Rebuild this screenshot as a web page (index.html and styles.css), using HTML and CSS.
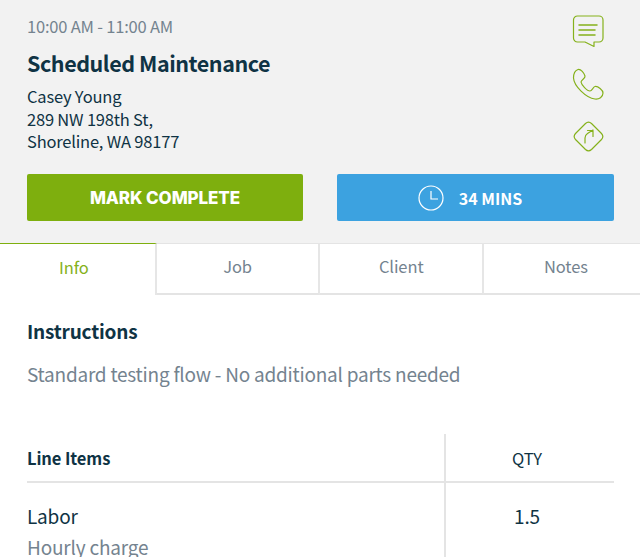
FILE: index.html
```html
<!DOCTYPE html>
<html lang="en">
<head>
  <meta charset="UTF-8" />
  <title>Job Detail</title>
  <link rel="stylesheet" href="styles.css">
</head>
<body>

  <!-- Job summary -->
  <div class="summary">
    <div class="summary-top">
      <div class="summary-text">
        <div class="time">10:00 AM - 11:00 AM</div>
        <h1>Scheduled Maintenance</h1>
        <p>Casey Young<br>289 NW 198th St,<br>Shoreline, WA 98177</p>
      </div>
      <div class="actions">
        <svg width="34" height="34" viewBox="0 0 34 34" fill="none" stroke="#85b11b" stroke-width="1.200" stroke-linejoin="round" stroke-linecap="round">
          <path d="M5.500 2h21.500a4 4 0 0 1 4 4v18a4 4 0 0 1-4 4h-5v4.500L13 28H5.500a4 4 0 0 1-4-4V6a4 4 0 0 1 4-4z"/>
          <path d="M7 11h18M7 16h16M7 21h16" stroke-width="1.500"/>
        </svg>
        <svg width="34" height="34" viewBox="0 0 34 34" fill="none" stroke="#85b11b" stroke-width="1.200" stroke-linejoin="round">
          <path d="M6 2.500C9 2 12 6 13 9C13.500 11.500 9.500 12.500 9 15C9.500 18 15 24 18 24C20 24 21 20 23 19.500C26 19 31 23 31 26C31 30 27 32.500 23 32C14 31 2 19 1.500 11C1.500 7 3 3.500 6 2.500Z"/>
        </svg>
        <svg width="34" height="34" viewBox="0 0 34 34" fill="none" stroke="#85b11b" stroke-width="1.200" stroke-linejoin="round" stroke-linecap="round">
          <path d="M13.500 3.500a4.500 4.500 0 0 1 6 0l10 10a4.500 4.500 0 0 1 0 6l-10 10a4.500 4.500 0 0 1-6 0l-10-10a4.500 4.500 0 0 1 0-6z"/>
          <path d="M13 23v-5c0-2 1-3.500 2.500-4.500l5.500-3.500M15.500 10.500h5.500v6"/>
        </svg>
      </div>
    </div>
    <div class="buttons">
      <button class="btn-complete">MARK COMPLETE</button>
      <button class="btn-timer">
        <svg width="26" height="26" viewBox="0 0 26 26" fill="none" stroke="#fff" stroke-width="1.200">
          <circle cx="13" cy="13" r="12"/>
          <path d="M13 6v8h7"/>
        </svg>
        34 MINS
      </button>
    </div>
  </div>

  <!-- Tabs -->
  <div class="tabs">
    <a class="tab active">Info</a>
    <a class="tab">Job</a>
    <a class="tab">Client</a>
    <a class="tab">Notes</a>
  </div>

  <div class="content">
    <h2>Instructions</h2>
    <p class="note">Standard testing flow - No additional parts needed</p>

    <table>
      <tr>
        <th>Line Items</th>
        <th class="qty">QTY</th>
      </tr>
      <tr>
        <td>Labor<span class="sub">Hourly charge</span></td>
        <td class="qty">1.5</td>
      </tr>
    </table>
  </div>

</body>
</html>
```

FILE: styles.css
```css
html, body {
  height: 557px;
  overflow: hidden;
}

body {
  margin: 0;
  font-family: "Noto Sans CJK SC", "Noto Sans", sans-serif;
  background-color: #fff;
  color: #0f3344;
}

/* Summary */
.summary {
  height: 243px;
  box-sizing: border-box;
  background-color: #f2f2f2;
  padding: 0 26px 0 27px;
}

.summary-top {
  display: flex;
  justify-content: space-between;
  height: 174px;
}

.time {
  margin-top: 14px;
  font-size: 16.500px;
  letter-spacing: -0.200px;
  line-height: 24px;
  color: #74838f;
}

h1 {
  margin: 10px 0 0;
  font-size: 21.500px;
  letter-spacing: -0.450px;
  line-height: 30px;
  font-weight: 700;
  color: #0f3344;
}

.summary-text p {
  margin: 7px 0 0;
  font-size: 16.500px;
  letter-spacing: -0.200px;
  line-height: 22.500px;
}

.actions {
  display: flex;
  flex-direction: column;
  gap: 19px;
  padding: 14px 8px 0 0;
}

.buttons {
  display: flex;
  justify-content: space-between;
}

.buttons button {
  height: 47px;
  border: none;
  border-radius: 2px;
  color: #fff;
  display: flex;
  align-items: center;
  justify-content: center;
}

.btn-complete {
  width: 276px;
  background-color: #7eaf0e;
  font-family: Inter, sans-serif;
  font-size: 17px;
  font-weight: 800;
  letter-spacing: -0.100px;
}

.buttons .btn-timer {
  width: 277px;
  background-color: #3ca2e0;
  font-family: "Noto Sans CJK SC", sans-serif;
  font-size: 16px;
  font-weight: 700;
  gap: 15px;
  padding: 0 11px 0 0;
}

/* Tabs */
.tabs {
  display: flex;
  height: 52px;
  margin: 0 -8px 0 -7px;
}

.tab {
  box-sizing: border-box;
  display: flex;
  align-items: center;
  justify-content: center;
  flex: 0 0 163.700px;
  padding-bottom: 5px;
  border-top: 1px solid #e4e4e4;
  border-bottom: 2px solid #e4e4e4;
  border-right: 2px solid #e6e6e6;
  font-size: 16.500px;
  letter-spacing: -0.100px;
  color: #74838f;
}

.tab:last-child {
  border-right: none;
}

.tab.active {
  color: #85b11b;
  border-top: 1px solid #7eaf0e;
  border-bottom: none;
}

/* Content */
.content {
  padding: 0 26px 0 27px;
}

h2 {
  margin: 23px 0 0;
  font-size: 19px;
  letter-spacing: -0.200px;
  line-height: 26px;
  font-weight: 700;
}

.note {
  margin: 17px 0 0;
  font-size: 19px;
  letter-spacing: -0.230px;
  line-height: 26px;
  color: #74838f;
}

table {
  width: 100%;
  margin-top: 47px;
  border-collapse: collapse;
}

th, td {
  padding: 0;
  text-align: left;
  vertical-align: top;
}

th {
  height: 47px;
  vertical-align: middle;
  border-bottom: 2px solid #e4e4e4;
  font-size: 16.500px;
  letter-spacing: -0.100px;
  font-weight: 700;
}

td {
  padding-top: 19px;
  font-size: 19px;
  letter-spacing: -0.200px;
  line-height: 28px;
}

.qty {
  width: 162px;
  padding-right: 6px;
  text-align: center;
  font-weight: 400;
  border-left: 2px solid #e4e4e4;
}

.sub {
  display: block;
  margin-top: 3px;
  color: #74838f;
}
```
